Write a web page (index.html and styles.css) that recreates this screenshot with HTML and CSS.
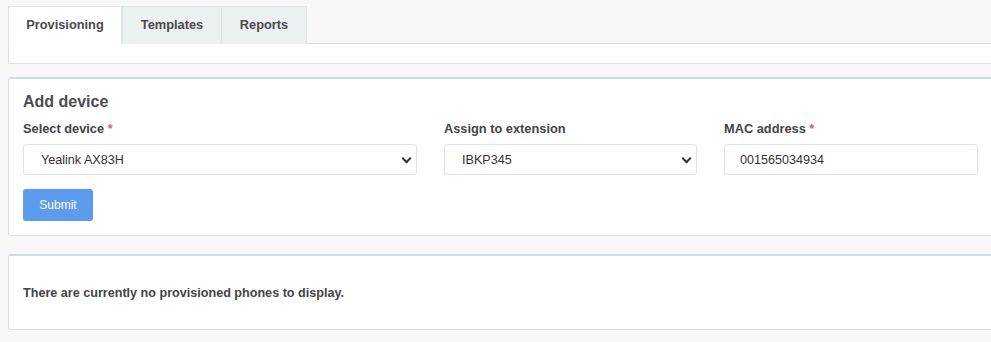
FILE: index.html
```html
<!DOCTYPE html>
<html lang="en">
<head>
    <meta charset="UTF-8">
    <meta name="viewport" content="width=device-width, initial-scale=1.0">
    <title>Provisioning</title>
    <link rel="stylesheet" href="styles.css">
</head>
<body>
    <div class="page">
        <div class="tabs-panel">
            <ul class="tabs">
                <li class="tab active">Provisioning</li>
                <li class="tab tab-templates">Templates</li>
                <li class="tab tab-reports">Reports</li>
            </ul>
            <div class="tab-strip"></div>
        </div>

        <div class="card">
            <h2 class="card-title">Add device</h2>
            <form class="device-form">
                <div class="field">
                    <label>Select device <span class="req">*</span></label>
                    <div class="select-wrap">
                        <select>
                            <option>Yealink AX83H</option>
                        </select>
                    </div>
                </div>
                <div class="field">
                    <label>Assign to extension</label>
                    <div class="select-wrap">
                        <select>
                            <option>IBKP345</option>
                        </select>
                    </div>
                </div>
                <div class="field">
                    <label>MAC address <span class="req">*</span></label>
                    <input type="text" value="001565034934">
                </div>
            </form>
            <button class="submit-btn" type="button">Submit</button>
        </div>

        <div class="card empty-card">
            <p>There are currently no provisioned phones to display.</p>
        </div>
    </div>
</body>
</html>
```

FILE: styles.css
```css
* {
    margin: 0;
    padding: 0;
    box-sizing: border-box;
}

body {
    font-family: "Liberation Sans", Arial, sans-serif;
    background: #f8f8f8;
    color: #444;
    overflow: hidden;
}

.page {
    padding: 6px 0 0 8px;
    width: 1010px;
}

/* tabs */
.tabs {
    list-style: none;
    display: flex;
    border-bottom: 1px solid #dcdcdc;
}

.tab {
    height: 38px;
    line-height: 36px;
    font-size: 12.8px;
    font-weight: bold;
    color: #4a4a4a;
    background: #ecf0f1;
    border: 1px solid #dfe4e6;
    border-bottom: none;
    margin-bottom: -1px;
    text-align: center;
}

.tab.active {
    background: #fff;
    width: 114px;
    border-color: #dde3e6;
}

.tab-templates {
    width: 100px;
}

.tab-reports {
    width: 85px;
    border-left: none;
}

.tab-strip {
    height: 20px;
    background: #fff;
    border-left: 1px solid #dbe3e2;
    border-bottom: 1px solid #dbe3e2;
}

/* cards */
.card {
    background: #fff;
    border: 1px solid #d9e1e6;
    border-top: 2px solid #d0dbe5;
    border-radius: 3px;
    margin-top: 13px;
    padding: 14px 14px 14px;
}

.card-title {
    font-size: 16px;
    font-weight: bold;
    color: #4d4d4d;
    margin-bottom: 10px;
}

.device-form {
    display: grid;
    grid-template-columns: 394px 253px 254px;
    column-gap: 27px;
}

.field label {
    display: block;
    font-size: 12.8px;
    font-weight: bold;
    color: #444;
    margin-bottom: 8px;
}

.req {
    color: #e05a5a;
}

.select-wrap {
    position: relative;
}

select,
input[type="text"] {
    display: block;
    width: 100%;
    height: 31px;
    border: 1px solid #dde3e6;
    border-radius: 3px;
    background: #fff;
    font-family: "Liberation Sans", Arial, sans-serif;
    font-size: 12.6px;
    color: #333;
    padding: 0 15px;
}

select {
    appearance: none;
    -webkit-appearance: none;
    padding: 0 17px;
}

.select-wrap::after {
    content: "";
    position: absolute;
    right: 7px;
    top: 11px;
    width: 5px;
    height: 5px;
    border-right: 2px solid #333;
    border-bottom: 2px solid #333;
    transform: rotate(45deg);
    pointer-events: none;
}

.submit-btn {
    margin-top: 14px;
    background: #5d9cec;
    color: #fff;
    border: none;
    border-radius: 3px;
    width: 70px;
    height: 32px;
    font-family: "Liberation Sans", Arial, sans-serif;
    font-size: 12px;
    cursor: pointer;
}

.empty-card {
    margin-top: 18px;
    height: 76px;
    padding: 30px 14px 0;
}

.empty-card p {
    font-size: 12.6px;
    font-weight: bold;
    color: #444;
}
```
